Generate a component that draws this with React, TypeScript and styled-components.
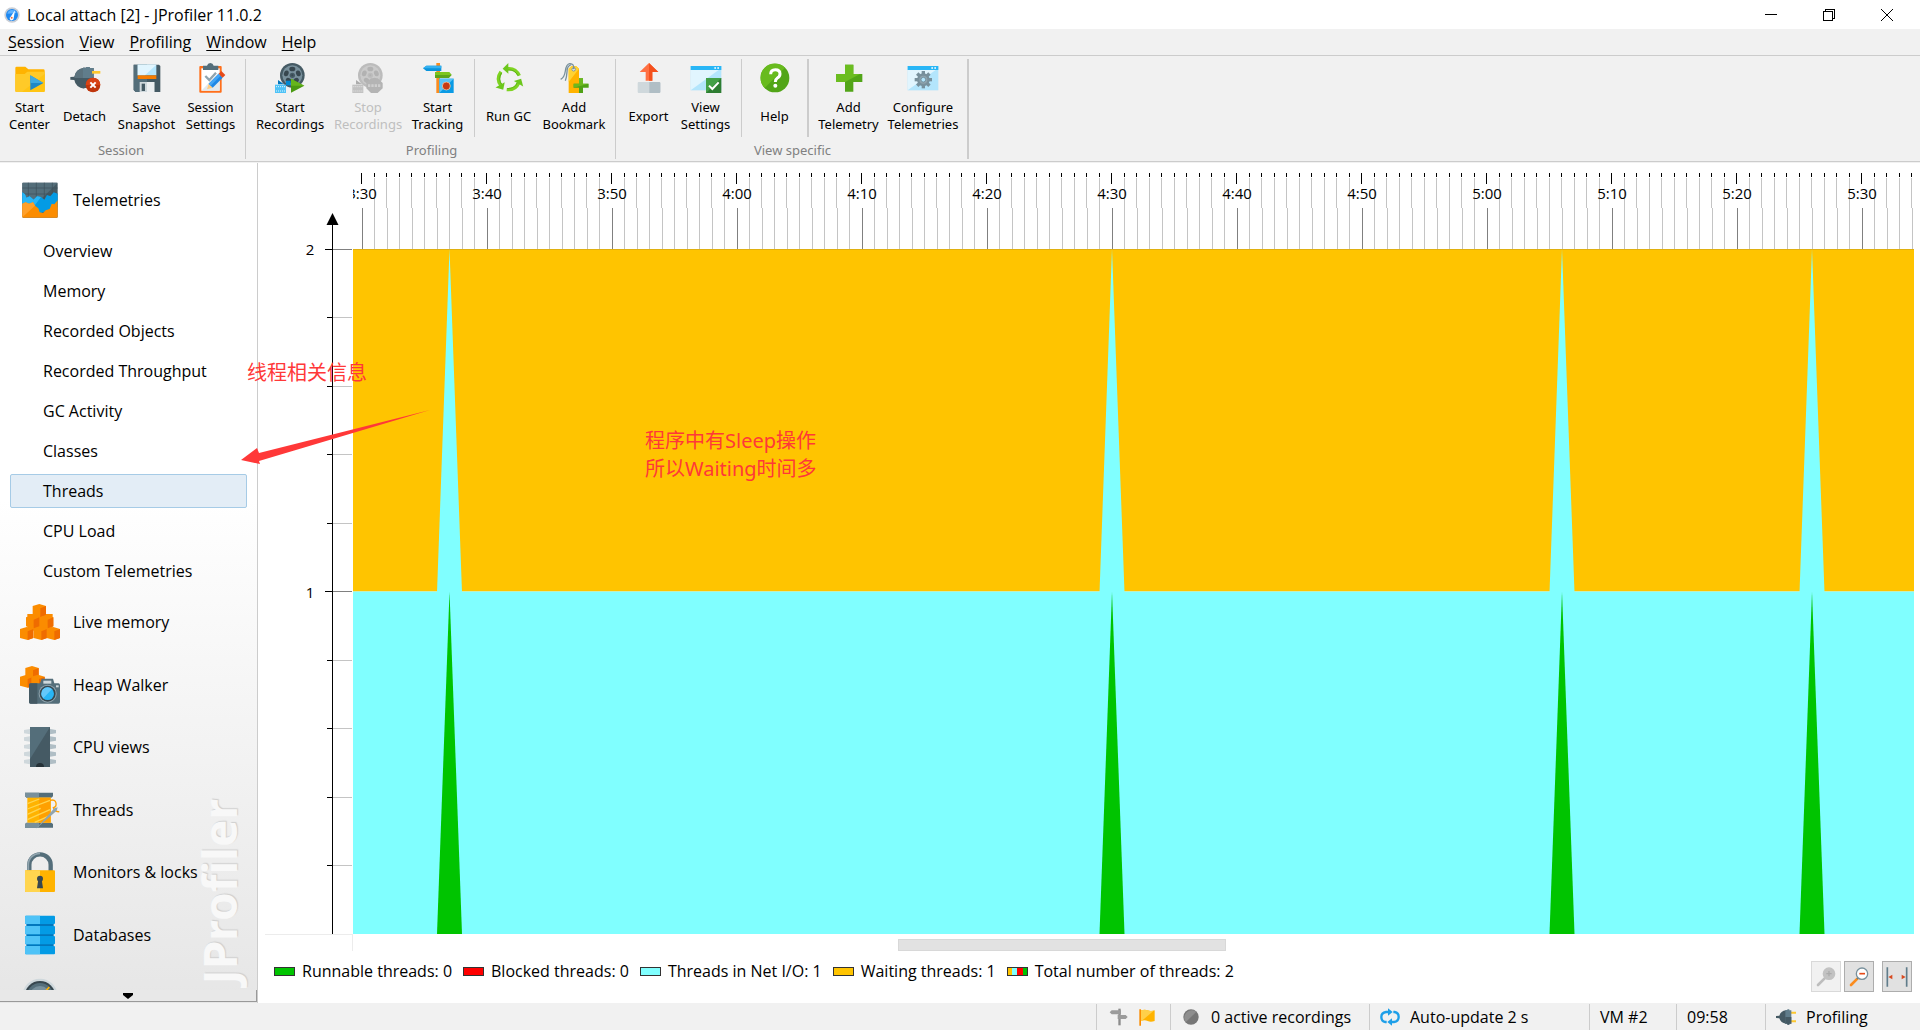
import React, { useLayoutEffect, useRef, useState } from "react";
import styled, { createGlobalStyle, css } from "styled-components";

const FONT = '"Open Sans", "Noto Sans", "Noto Sans CJK SC", sans-serif';
const WIDE_FONT = '"Noto Sans", "Open Sans", "Noto Sans CJK SC", sans-serif';
const LINE = "#cccccc";
const CHROME = "#f1f1f1";

const GlobalStyle = createGlobalStyle`
  * { box-sizing: border-box; }
  body { margin: 0; background: #fff; color: #000; font: 16px/20px ${FONT}; }
  button { font: inherit; color: inherit; border: 0; background: none; padding: 0; margin: 0; }
  ul { list-style: none; margin: 0; padding: 0; }
  svg { display: block; flex: none; }
`;

/* ---------- window frame ---------- */

const Window = styled.div`
  display: flex;
  flex-direction: column;
  height: 100vh;
  overflow: hidden;
`;

const TitleBar = styled.header`
  display: flex;
  align-items: center;
  height: 29px;
  flex: none;
  padding: 0 4px;
`;

const Title = styled.h1`
  flex: 1;
  margin: 0 0 0 7px;
  font-size: 16px;
  line-height: 20px;
  font-weight: 400;
`;

const WindowButton = styled.button`
  display: grid;
  place-items: center;
  width: 58px;
  height: 29px;
`;

const MenuBar = styled.nav`
  display: flex;
  align-items: center;
  gap: 15px;
  flex: none;
  height: 27px;
  padding: 0 8px;
  background: ${CHROME};
  border-bottom: 1px solid ${LINE};
`;

const MenuButton = styled.button`
  line-height: 20px;

  &::first-letter {
    text-decoration: underline;
    text-underline-offset: 2px;
  }
`;

/* ---------- toolbar ---------- */

const Toolbar = styled.div`
  display: flex;
  flex: none;
  padding: 3px 0 2px;
  background: ${CHROME};
  border-bottom: 1px solid ${LINE};
`;

const ToolGroup = styled.section<{ $edge?: number; $wide?: boolean }>`
  display: flex;
  flex-direction: column;
  padding: ${(p) => (p.$wide ? "0 3px 0 5px" : "0 5px 0 2px")};
  border-right: ${(p) => p.$edge ?? 1}px solid ${LINE};
`;

const ToolRow = styled.div`
  display: flex;
  height: 78px;
`;

const ToolButton = styled.button<{ $width: number }>`
  display: flex;
  flex-direction: column;
  align-items: center;
  gap: 5px;
  width: ${(p) => p.$width}px;
  padding-top: 3px;
  font-family: ${WIDE_FONT};
  font-size: 13px;
  line-height: 17px;

  &:disabled {
    color: #bfbfbf;
  }
`;

const ToolLabel = styled.span`
  display: flex;
  align-items: center;
  justify-content: center;
  height: 34px;
  text-align: center;
  white-space: pre;
`;

const ToolDivider = styled.span<{ $thick?: boolean }>`
  width: ${(p) => (p.$thick ? 2 : 1)}px;
  margin: 0 6px;
  background: ${LINE};
`;

const GroupCaption = styled.h2`
  margin: 5px 0 0;
  font-family: ${WIDE_FONT};
  font-size: 13px;
  line-height: 17px;
  font-weight: 400;
  color: #808080;
  text-align: center;
`;

/* ---------- sidebar ---------- */

const Workspace = styled.div`
  position: relative;
  display: flex;
  flex: 1;
  min-height: 0;
  border-top: 1px solid ${CHROME};
`;

const Sidebar = styled.aside`
  position: relative;
  display: flex;
  flex-direction: column;
  flex: none;
  width: 258px;
  border-right: 1px solid ${LINE};
  background: linear-gradient(#fff 40%, #e6e6e6);
`;

const SidebarScroll = styled.div`
  flex: 1;
  min-height: 0;
  overflow: hidden;
`;

const sectionRow = css`
  position: relative;
  z-index: 1;
  display: flex;
  align-items: center;
  gap: 13px;
  width: 100%;
  height: 62px;
  padding: 0 20px;
  text-align: left;
  white-space: nowrap;
`;

const OpenSection = styled.button`
  ${sectionRow}
  height: 68px;
  padding-top: 5px;
`;

const SectionItem = styled.li`
  &:nth-child(even) > button {
    height: 63px;
  }
`;

const SectionButton = styled.button`
  ${sectionRow}
`;

const ViewItem = styled.li`
  padding: 3px 10px;
`;

const ViewButton = styled.button<{ $selected?: boolean }>`
  display: block;
  width: 100%;
  height: 34px;
  padding: 0 32px;
  border: 1px solid ${(p) => (p.$selected ? "#a6cbe6" : "transparent")};
  border-radius: 2px;
  background: ${(p) => (p.$selected ? "#e3edf6" : "none")};
  text-align: left;
`;

const Watermark = styled.span`
  position: absolute;
  right: 10px;
  bottom: 19px;
  writing-mode: vertical-rl;
  rotate: 180deg;
  font-family: ${WIDE_FONT};
  font-size: 46px;
  line-height: 56px;
  font-weight: 700;
  color: #f8f8f8;
  text-shadow: 1px 1px 1px #cfcfcf;
  pointer-events: none;
`;

const ScrollDown = styled.button`
  position: relative;
  display: grid;
  place-items: center;
  height: 12px;
  margin-bottom: 1px;
  background: #e8e8e8;
  border: solid #999;
  border-width: 0 1px 1px 0;
`;

/* ---------- content ---------- */

const Content = styled.main`
  display: flex;
  flex-direction: column;
  flex: 1;
  min-width: 0;
  padding: 0 6px 0 7px;
`;

const ChartArea = styled.div`
  flex: 1;
  min-height: 0;
  overflow: hidden;
`;

const ScrollRow = styled.div`
  display: flex;
  flex: none;
  height: 17px;
`;

const AxisCorner = styled.div`
  width: 88px;
  border: solid #ececec;
  border-width: 1px 1px 0 0;
`;

const ScrollTrack = styled.div`
  display: flex;
  flex: 1;
  padding-top: 5px;
`;

const ScrollThumb = styled.div`
  width: 21%;
  height: 12px;
  margin-left: 34.9%;
  background: #e2e2e2;
  border: 1px solid #d8d8d8;
`;

const Footer = styled.div`
  display: flex;
  align-items: flex-start;
  justify-content: space-between;
  flex: none;
  height: 52px;
  padding: 10px 2px 0 9px;
`;

const Legend = styled.ul`
  display: flex;
  gap: 11px;
`;

const LegendItem = styled.li`
  display: flex;
  align-items: center;
  gap: 7px;
  white-space: nowrap;
`;

const Swatch = styled.span<{ $fill: string }>`
  width: 21px;
  height: 9px;
  border: 1px solid #333;
  background: ${(p) => p.$fill} border-box;
`;

const ZoomTools = styled.div`
  display: flex;
  gap: 3px;
`;

const ZoomButton = styled.button<{ $apart?: boolean }>`
  display: grid;
  place-items: center;
  width: 30px;
  height: 31px;
  margin-left: ${(p) => (p.$apart ? 5 : 0)}px;
  background: #e1e1e1;
  border: 1px solid #adadad;

  &:disabled {
    background: #f1f1f1;
    border-color: #d9d9d9;
  }
`;

/* ---------- status bar ---------- */

const StatusBar = styled.footer`
  display: flex;
  justify-content: flex-end;
  flex: none;
  height: 27px;
  padding-top: 1px;
  background: ${CHROME};
`;

const StatusCell = styled.div<{ $width: number }>`
  display: flex;
  align-items: center;
  gap: 10px;
  width: ${(p) => p.$width}px;
  padding-left: 10px;
  border-left: 1px solid ${LINE};
  white-space: nowrap;
`;

/* ---------- annotations ---------- */

const Note = styled.p<{ $x: number; $y: number }>`
  position: absolute;
  z-index: 3;
  left: ${(p) => p.$x}px;
  top: ${(p) => p.$y}px;
  margin: 0;
  font: 20px/28px ${WIDE_FONT};
  color: #ff3838;
  white-space: pre;
`;

const NoteArrow = styled.svg`
  position: absolute;
  z-index: 3;
  left: 241px;
  top: 247px;
`;

/* ---------- icons ---------- */

type IconProps = { box: string; size?: number; children: React.ReactNode };

const Icon = ({ box, size = 32, children }: IconProps) => (
  <svg width={size} height={size} viewBox={box} aria-hidden="true">
    {children}
  </svg>
);

const StartCenterIcon = () => (
  <Icon box="42 186 96 96">
    <path d="M46 204q0-4 4-4h26l9 8h45q4 0 4 4v60q0 4-4 4H50q-4 0-4-4z" fill="#ffb300" />
    <path d="M46 222l28 0 8-7h52v57q0 4-4 4H50q-4 0-4-4z" fill="#ffca28" />
    <path d="M134 222v50q0 4-4 4H66z" fill="#ffc107" opacity=".6" />
    <path d="M91 226l39 23-39 22z" fill="#1e88c8" />
    <path d="M91 226l39 23H91z" fill="#3fa9e0" />
  </Icon>
);

const DetachIcon = () => (
  <Icon box="206 186 96 96">
    <path d="M210 231l12-1q4-24 30-27v63q-26-3-30-26l-12-1z" fill="#455a64" />
    <path d="M222 234q2-27 30-31v31z" fill="#5b727d" />
    <path d="M248 203h10v-2h10v3h12v60h-32z" fill="#455a64" />
    <path d="M248 203h10v-2h10v3h12v30h-32z" fill="#607d8b" />
    <path d="M275 213h25v8h-25z" fill="#fdc82f" />
    <circle cx="278" cy="255" r="22" fill="#bf360c" />
    <path d="M256 255a22 22 0 0 1 44 0z" fill="#d84315" />
    <path d="M270 247l16 16M286 247l-16 16" stroke="#fff" strokeWidth="6" />
  </Icon>
);

const SaveIcon = () => (
  <Icon box="391 186 96 96">
    <path d="M399 194h76l4 4v78h-74l-6-6z" fill="#455a64" />
    <path d="M399 194h40v82h-34l-6-6z" fill="#546e7a" />
    <path d="M411 194h56v32h-56z" fill="#b3e5fc" />
    <path d="M411 194h56l-34 32h-22z" fill="#e1f5fe" />
    <path d="M411 226h56v11h-56z" fill="#f57c00" />
    <path d="M417 246h44v30h-44z" fill="#cfd8dc" />
    <path d="M439 246h22v30h-22z" fill="#eceff1" />
    <path d="M423 251h10v22h-10z" fill="#455a64" />
  </Icon>
);

const SessionSettingsIcon = () => (
  <Icon box="584 186 96 96">
    <rect x="597" y="198" width="67" height="80" rx="3" fill="#ff6f1a" />
    <path d="M603 205h55v67h-55z" fill="#fff" />
    <path d="M658 215v57h-55z" fill="#e3e9ec" />
    <path d="M608 197h12q2-8 10-8t10 8h14v13h-46z" fill="#546e7a" />
    <path d="M615 228l12 12 20-22" fill="none" stroke="#90a4ae" strokeWidth="7" />
    <path d="M620 268l5-17 12 12z" fill="#ffcc80" />
    <path d="M625 251l30-30 12 12-30 30z" fill="#1e88e5" />
    <path d="M625 251l30-30 6 6-30 30z" fill="#42a5f5" />
    <path d="M655 221l8-8 12 12-8 8z" fill="#e64a19" />
  </Icon>
);

const Reel = ({ dark, light, hole }: { dark: string; light: string; hole: string }) => (
  <g>
    <circle cx="877" cy="226" r="37" fill={dark} />
    <circle cx="877" cy="226" r="30" fill={light} />
    {[0, 72, 144, 216, 288].map((a) => (
      <ellipse key={a} cx="877" cy="207" rx="9" ry="7" fill={hole} transform={`rotate(${a} 877 226)`} />
    ))}
    <circle cx="877" cy="226" r="8" fill={dark} />
    <circle cx="877" cy="226" r="3" fill={hole} />
  </g>
);

const StartRecordingsIcon = () => (
  <Icon box="822 186 96 96">
    <Reel dark="#455a64" light="#78909c" hole="#37474f" />
    <path d="M834 240l18 13h-18z" fill="#0277bd" />
    <path d="M825 254h33v25h-33z" fill="#4fc3f7" />
    <path d="M828 260h27M828 273h27" stroke="#e1f5fe" strokeWidth="3" strokeDasharray="3 3" />
    <path d="M858 242h14v14h-14z" fill="#0288d1" />
    <path d="M873 236l40 21-40 21z" fill="#4a9a12" />
    <path d="M873 236l40 21h-40z" fill="#66b51c" />
  </Icon>
);

const StopRecordingsIcon = () => (
  <Icon box="822 186 96 96">
    <Reel dark="#bcbcbc" light="#cacaca" hole="#b2b2b2" />
    <path d="M834 240l18 13h-18z" fill="#adadad" />
    <path d="M823 254h33v25h-33z" fill="#c2c2c2" />
    <path d="M826 260h27M826 273h27" stroke="#e4e4e4" strokeWidth="3" strokeDasharray="3 3" />
    <path d="M879 235h20l15 14v16l-15 14h-20l-14-14v-16z" fill="#b4b4b4" />
    <path d="M870 257h38" stroke="#cfcfcf" strokeWidth="8" strokeDasharray="7 3" />
  </Icon>
);

const TrackingIcon = () => (
  <Icon box="1264 186 96 96">
    <path d="M1307 189h11v90h-11z" fill="#fb8c1e" />
    <path d="M1277 197h45v16h-45l-10-8z" fill="#0a94dc" />
    <path d="M1277 197h45v8h-55z" fill="#35b1f0" />
    <path d="M1303 216h42l8 9-8 9h-42z" fill="#5ca51b" />
    <path d="M1303 216h42l8 9h-50z" fill="#7cc61f" />
    <path d="M1316 236h43v43h-43z" fill="#0a9be5" />
    <path d="M1316 236h43l-43 43z" fill="#58c4f7" />
    <circle cx="1337" cy="258" r="12" fill="#c63a12" stroke="#ffe0b2" strokeWidth="2" />
  </Icon>
);

const RunGcIcon = () => (
  <Icon box="39 186 96 96">
    {[0, 120, 240].map((a) => (
      <g key={a} transform={`rotate(${a} 87 237)`}>
        <path d="M82 206q25-3 36 21" fill="none" stroke="#7ed321" strokeWidth="10" />
        <path d="M84 210q20-2 30 17" fill="none" stroke="#5db318" strokeWidth="3" />
        <path d="M68 206l17-17v32z" fill="#6cc71c" />
      </g>
    ))}
  </Icon>
);

const BookmarkIcon = () => (
  <Icon box="235 186 96 96">
    <path d="M267 206l8-7h15l8 7v73h-31z" fill="#ffb300" />
    <path d="M267 206l8-7h15l8 7-31 40z" fill="#ffd233" />
    <circle cx="282" cy="208" r="5" fill="#fff" stroke="#78909c" strokeWidth="3" />
    <path d="M282 208q2-18-12-17-10 1-13 22-3 20-14 25M275 194q-13 3-13 22-1 16-5 26" fill="none" stroke="#78909c" strokeWidth="4" />
    <path d="M298 235h12v16h17v12h-17v16h-12v-16h-16v-12h16z" fill="#4fa116" />
    <path d="M298 235h12v16h17l-45 12v-12h16z" fill="#6bb81f" />
  </Icon>
);

const ExportIcon = () => (
  <Icon box="458 186 96 96">
    <path d="M506 189l28 27h-18v26h-20v-26h-18z" fill="#ff7043" />
    <path d="M506 189l28 27h-18v26h-10z" fill="#f4511e" />
    <rect x="472" y="246" width="68" height="33" rx="3" fill="#cfd8dc" />
    <path d="M507 246h30q3 0 3 3v27q0 3-3 3h-30z" fill="#b0bec5" />
  </Icon>
);

const PaneBack = ({ x }: { x: number }) => (
  <g>
    <path d={`M${x} 198h92v73h-92z`} fill="#b3e5fc" />
    <path d={`M${x} 210h84l-84 61z`} fill="#e1f5fe" />
    <path d={`M${x} 198h92v12h-92z`} fill="#29b6f6" />
    <path d={`M${x + 71} 204h5M${x + 80} 204h5`} stroke="#fff" strokeWidth="4" />
  </g>
);

const ViewSettingsIcon = () => (
  <Icon box="630 186 96 96">
    <PaneBack x={632} />
    <path d="M678 234h46v45h-46z" fill="#2e7d32" />
    <path d="M678 234h46l-46 45z" fill="#43a047" />
    <path d="M687 257l10 10 19-20" fill="none" stroke="#fff" strokeWidth="6" />
  </Icon>
);

const HelpIcon = () => (
  <Icon box="837 186 96 96">
    <circle cx="885" cy="234" r="43" fill="#52a518" />
    <path d="M854 264a43 43 0 1 1 61-61z" fill="#68bb1e" />
    <path d="M872 223q0-14 14-14t14 12q0 8-8 13-6 4-6 12" fill="none" stroke="#fff" strokeWidth="9" />
    <circle cx="886" cy="257" r="6" fill="#fff" />
  </Icon>
);

const AddTelemetryIcon = () => (
  <Icon box="1058 186 96 96">
    <path d="M1094 194h25v28h27v24h-27v29h-25v-29h-27v-24h27z" fill="#52a518" />
    <path d="M1094 194h25v28h20l-45 24h-27v-24h27z" fill="#6bbd20" />
  </Icon>
);

const ConfigureIcon = () => (
  <Icon box="1279 186 96 96">
    <PaneBack x={1281} />
    {[0, 45, 90, 135].map((a) => (
      <path key={a} d="M1323 213h10v52h-10z" fill="#78909c" transform={`rotate(${a} 1328 239)`} />
    ))}
    <circle cx="1328" cy="239" r="19" fill="#78909c" />
    <circle cx="1328" cy="239" r="12" fill="#90a4ae" />
    <circle cx="1328" cy="239" r="7" fill="#b3e5fc" stroke="#607d8b" strokeWidth="2" />
  </Icon>
);

const TelemetriesIcon = () => (
  <Icon size={40} box="60 61 120 120">
    <rect x="67" y="69" width="106" height="105" rx="3" fill="#455a64" />
    <path d="M67 69h106l-56 56H67z" fill="#546e7a" />
    <path d="M85 69v50M109 69v50M133 69v50M157 69v40M67 85h106M67 103h106" stroke="#3d505a" strokeWidth="2" />
    <path d="M67 98l8 6 4 10 10-4 12 10 10-10 12 2 10 8 8-14 10 4 10-12 12 4v40l-60 22-46-26z" fill="#039be5" />
    <path d="M67 98l8 6 4 10 10-4 12 10 10-10 12 2-24 32-32-12z" fill="#29b6f6" />
    <path d="M67 132l10-4 10 4 12-4 8 12 8 6 4 12 10 2 8-8 12-4 6-16 8 2 10-12v49q0 3-3 3H70q-3 0-3-3z" fill="#fb8c00" />
    <path d="M67 132l10-4 10 4 12-4 6 10-38 35z" fill="#ffa02a" />
  </Icon>
);

const Cube = ({ x, y }: { x: number; y: number }) => (
  <g transform={`translate(${x} ${y})`}>
    <path d="M0 6L20 0l20 6v27l-17 6-23-6z" fill="#fb8c00" />
    <path d="M23 13l17-7v27l-17 6z" fill="#ef6c00" />
  </g>
);

const LiveMemoryIcon = () => (
  <Icon size={40} box="60 486 120 120">
    <path d="M82 522h76v50H82z" fill="#fb8c00" />
    <path d="M60 486h38v40H60z" fill="none" />
    <Cube x={98} y={492} />
    <Cube x={78} y={526} />
    <Cube x={120} y={526} />
    <Cube x={60} y={561} />
    <Cube x={101} y={561} />
    <Cube x={140} y={561} />
  </Icon>
);

const HeapWalkerIcon = () => (
  <Icon size={40} box="60 673 120 120">
    <Cube x={76} y={676} />
    <Cube x={60} y={702} />
    <Cube x={94} y={702} />
    <path d="M87 733q0-5 5-5h28l5-14h34l4 14h12q5 0 5 5v51q0 5-5 5H92q-5 0-5-5z" fill="#546e7a" />
    <path d="M87 733q0-5 5-5h20v61H92q-5 0-5-5z" fill="#455a64" />
    <path d="M130 720h24v9h-24z" fill="#cfd8dc" />
    <circle cx="143" cy="759" r="27" fill="#90a4ae" />
    <circle cx="143" cy="759" r="24" fill="#37474f" />
    <circle cx="143" cy="759" r="19" fill="#29b6f6" />
    <path d="M130 773a19 19 0 0 1 26-28z" fill="#64c8fa" />
    <path d="M168 737h8" stroke="#cfd8dc" strokeWidth="6" />
  </Icon>
);

const CpuIcon = () => (
  <Icon size={40} box="60 -6 120 120">
    {[8, 30, 53, 75, 98].map((y) => (
      <g key={y}>
        <path d={`M72 ${y - 5}l18-3v16l-18-3z`} fill="#cfd8dc" />
        <path d={`M168 ${y - 5}l-18-3v16l18-3z`} fill="#b0bec5" />
      </g>
    ))}
    <path d="M90-6h60v120H90z" fill="#455a64" />
    <path d="M90-6h60L90 90z" fill="#546e7a" />
    <path d="M108 114q0-12 12-12t12 12z" fill="#263238" />
  </Icon>
);

const ThreadsIcon = () => (
  <Icon size={40} box="60 181 120 120">
    <path d="M75 189h84v11l-5 4H80l-5-4z" fill="#546e7a" />
    <path d="M75 189h42v15H80l-5-4z" fill="#78909c" />
    <path d="M75 283l5-4h74l5 4v11H75z" fill="#546e7a" />
    <path d="M75 283l5-4h37v15H75z" fill="#78909c" />
    <path d="M82 204h70v75H82z" fill="#ffb300" />
    <path d="M117 204h35v75h-35z" fill="#ffa000" />
    <path d="M82 222l36-14M82 238l68-26M82 254l40-18M82 270l68-30M104 278l46-20" stroke="#ffd54f" strokeWidth="4" />
    <path d="M150 212q16-4 18 8t-8 14q4 14 18 12" fill="none" stroke="#ffa000" strokeWidth="4" />
    <path d="M107 298l56-62 10-3-3 10z" fill="#90a4ae" />
  </Icon>
);

const LockIcon = () => (
  <Icon size={40} box="60 368 120 120">
    <path d="M88 426v-20a32 31 0 0 1 64 0v20" fill="none" stroke="#546e7a" strokeWidth="13" />
    <path d="M85 426v-20a35 34 0 0 1 35-34" fill="none" stroke="#90a4ae" strokeWidth="5" />
    <rect x="75" y="423" width="90" height="65" rx="3" fill="#ffb300" />
    <path d="M78 423h42v65H78q-3 0-3-3v-59q0-3 3-3z" fill="#ffd54f" />
    <circle cx="120" cy="448" r="9" fill="#37474f" />
    <path d="M115 450h10l4 27h-18z" fill="#37474f" />
  </Icon>
);

const DatabaseIcon = () => (
  <Icon size={40} box="60 557 120 120">
    <path d="M79 570h82v95H79z" fill="#0277bd" />
    {[559, 590, 620, 650].map((y) => (
      <g key={y}>
        <rect x="75" y={y} width="90" height="25" rx="3" fill="#039be5" />
        <path d={`M78 ${y}h42v25H78q-3 0-3-3v-19q0-3 3-3z`} fill="#4fc3f7" />
      </g>
    ))}
  </Icon>
);

const GaugeIcon = () => (
  <Icon size={40} box="60 742 120 120">
    <circle cx="120" cy="800" r="53" fill="#cfd8dc" />
    <circle cx="120" cy="800" r="46" fill="#37474f" />
    <circle cx="120" cy="800" r="40" fill="#546e7a" />
    <circle cx="120" cy="800" r="31" fill="#78909c" />
    <path d="M120 804l28-32" stroke="#ffb300" strokeWidth="5" />
  </Icon>
);

const AppIcon = () => (
  <svg width="16" height="16" viewBox="0 0 48 48" aria-hidden="true">
    <circle cx="24" cy="24" r="23" fill="#c9ced6" />
    <circle cx="24" cy="24" r="18" fill="#1e88f0" />
    <path d="M10 20a15 15 0 0 1 28-2z" fill="#5fb2ff" />
    <path d="M33 10l-4 24a6 6 0 1 1-9-5z" fill="#fff" />
    <circle cx="23" cy="32" r="3" fill="#ef6c3a" />
  </svg>
);

const SignpostIcon = () => (
  <svg width="22" height="18" viewBox="-6 0 66 54" aria-hidden="true">
    <path d="M28 2h7v50h-7z" fill="#8c8c8c" />
    <path d="M8 7h28v12H8l-6-6zM26 21h24l6 6-6 6H26z" fill="#9b9b9b" />
  </svg>
);

const FlagIcon = () => (
  <svg width="16" height="17" viewBox="0 0 48 51" aria-hidden="true">
    <path d="M1 1h5v49H1z" fill="#fb8c00" />
    <path d="M6 4q12-4 20 0t21 0v32q-12 4-21 0t-20 0z" fill="#ffb300" />
    <path d="M6 4q12-4 20 0t18 1L8 36H6z" fill="#ffd04a" />
  </svg>
);

const RecordIcon = () => (
  <svg width="20" height="16" viewBox="-6 0 60 48" aria-hidden="true">
    <circle cx="24" cy="24" r="23" fill="#767676" />
    <path d="M8 40A23 23 0 0 1 40 8z" fill="#8e8e8e" />
  </svg>
);

const SyncIcon = () => (
  <svg width="20" height="18" viewBox="0 0 60 54" aria-hidden="true">
    <g fill="none" stroke="#1e9fe8" strokeWidth="7">
      <path d="M20 42h-4q-12-2-12-15t14-15h10" />
      <path d="M40 12h4q12 2 12 15t-14 15H32" />
    </g>
    <path d="M24 1l14 11-14 11zM36 31L22 42l14 11z" fill="#1e9fe8" />
  </svg>
);

const PlugIcon = () => (
  <svg width="20" height="16" viewBox="0 0 60 48" aria-hidden="true">
    <path d="M42 8h18v6H42zM42 34h18v6H42z" fill="#fdc82f" />
    <path d="M0 21l10-1Q14 6 30 4v40Q14 42 10 28L0 27z" fill="#455a64" />
    <path d="M28 3h6V1h6v3h6v40h-6v3h-6v-3h-6z" fill="#607d8b" />
    <path d="M28 24h18v20h-6v3h-6v-3h-6z" fill="#455a64" />
  </svg>
);

const LensIcon = ({ minus }: { minus?: boolean }) => (
  <svg width="20" height="20" viewBox="0 0 60 60" aria-hidden="true">
    <path d="M6 54l20-20" stroke={minus ? "#fb8c1e" : "#bdbdbd"} strokeWidth="8" strokeLinecap="round" />
    <path d="M24 36l6-6" stroke={minus ? "#607d8b" : "#bdbdbd"} strokeWidth="5" />
    <circle cx="39" cy="20" r="17" fill={minus ? "#fff" : "#c2c2c2"} stroke={minus ? "#78909c" : "#c2c2c2"} strokeWidth="4" />
    {minus ? (
      <path d="M31 20h17" stroke="#e64a19" strokeWidth="5" />
    ) : (
      <path d="M31 20h16M39 12v16" stroke="#ababab" strokeWidth="4" />
    )}
  </svg>
);

const FitIcon = () => (
  <svg width="22" height="20" viewBox="0 0 66 60" aria-hidden="true">
    <path d="M4 1v58M62 1v58" stroke="#607d8b" strokeWidth="5" />
    <path d="M7 30l12-7v14zM59 30l-12-7v14z" fill="#d84a20" />
  </svg>
);

/* ---------- thread history chart ---------- */

const SECOND = 12.5;
const PLOT_LEFT = 88;
const PLOT_TOP = 86;
const AXIS_X = 67;
const FIRST_MARK = 97;
const FIRST_TIME = 210;
const SPIKES = [217, 270, 306, 326];

const timeX = (t: number) => FIRST_MARK + (t - FIRST_TIME) * SECOND;
const clock = (t: number) => `${Math.floor(t / 60)}:${String(t % 60).padStart(2, "0")}`;

function useSize<T extends HTMLElement>() {
  const ref = useRef<T>(null);
  const [size, setSize] = useState({ width: 1649, height: 771 });
  useLayoutEffect(() => {
    const node = ref.current;
    if (!node) return;
    const read = () => setSize({ width: node.clientWidth, height: node.clientHeight });
    read();
    const observer = new ResizeObserver(read);
    observer.observe(node);
    return () => observer.disconnect();
  }, []);
  return { ref, size };
}

function ThreadChart() {
  const { ref, size } = useSize<HTMLDivElement>();
  const { width, height } = size;
  const unit = (height - PLOT_TOP) / 2;
  const middle = PLOT_TOP + unit;
  const count = Math.max(0, Math.floor((width - FIRST_MARK) / SECOND)) + 1;
  const seconds = Array.from({ length: count }, (_, i) => FIRST_TIME + i);

  return (
    <ChartArea ref={ref}>
      <svg width={width} height={height} role="img" aria-label="Thread states over time">
        <clipPath id="plot-columns">
          <rect x={PLOT_LEFT} y="0" width={Math.max(0, width - PLOT_LEFT)} height={height} />
        </clipPath>
        <g clipPath="url(#plot-columns)">
          <g shapeRendering="crispEdges">
            {seconds.map((t) => {
              const low = Math.floor(timeX(t));
              const high = Math.floor(timeX(t) - 0.5);
              const major = t % 10 === 0;
              return (
                <g key={t}>
                  <rect x={high} y="10" width="1" height={major ? 11 : 4} fill="#000" />
                  {!major && <rect x={high} y="15" width="1" height="30" fill="#c4c4c4" />}
                  <rect x={low} y="45" width="1" height="41" fill={major ? "#808080" : "#c4c4c4"} />
                </g>
              );
            })}
          </g>
          {seconds.filter((t) => t % 10 === 0).map((t) => (
            <text key={t} x={timeX(t)} y="36" textAnchor="middle" fontSize="15">
              {clock(t)}
            </text>
          ))}
          <rect x={PLOT_LEFT} y={PLOT_TOP} width={width} height={unit} fill="#ffc400" />
          <rect x={PLOT_LEFT} y={PLOT_TOP} width={width} height="1" fill="#e0b010" />
          <rect x={PLOT_LEFT} y={middle} width={width} height={unit} fill="#80ffff" />
          {SPIKES.map((t) => {
            const x = timeX(t);
            return (
              <g key={t}>
                <path d={`M${x} ${PLOT_TOP}L${x + SECOND} ${middle + 1}H${x - SECOND}z`} fill="#80ffff" />
                <path d={`M${x} ${middle}L${x + SECOND} ${height}H${x - SECOND}z`} fill="#00c400" />
              </g>
            );
          })}
        </g>
        <g shapeRendering="crispEdges">
          <rect x={AXIS_X} y={PLOT_TOP - 26} width="1" height={height} fill="#000" />
          {Array.from({ length: 10 }, (_, i) => {
            const y = Math.floor(PLOT_TOP + (unit / 5) * i);
            const major = i % 5 === 0;
            return (
              <g key={i}>
                <rect x={AXIS_X - (major ? 7 : 5)} y={y} width={major ? 7 : 5} height="1" fill="#000" />
                <rect x={AXIS_X + 1} y={y} width="19" height="1" fill={major ? "#808080" : "#c4c4c4"} />
              </g>
            );
          })}
        </g>
        <path d={`M${AXIS_X + 0.5} 50l6 12h-12z`} fill="#000" />
        <text x="45" y={PLOT_TOP + 6} textAnchor="middle" fontSize="15">2</text>
        <text x="45" y={middle + 6} textAnchor="middle" fontSize="15">1</text>
      </svg>
    </ChartArea>
  );
}

/* ---------- data ---------- */

type Tool = { label: string; width: number; icon: React.ReactNode; disabled?: boolean };

const sessionTools: Tool[] = [
  { label: "Start\nCenter", width: 55, icon: <StartCenterIcon /> },
  { label: "Detach", width: 55, icon: <DetachIcon /> },
  { label: "Save\nSnapshot", width: 69, icon: <SaveIcon /> },
  { label: "Session\nSettings", width: 59, icon: <SessionSettingsIcon /> },
];
const recordTools: Tool[] = [
  { label: "Start\nRecordings", width: 78, icon: <StartRecordingsIcon /> },
  { label: "Stop\nRecordings", width: 78, icon: <StopRecordingsIcon />, disabled: true },
  { label: "Start\nTracking", width: 61, icon: <TrackingIcon /> },
];
const gcTools: Tool[] = [
  { label: "Run GC", width: 55, icon: <RunGcIcon /> },
  { label: "Add\nBookmark", width: 76, icon: <BookmarkIcon /> },
];
const viewTools: Tool[] = [
  { label: "Export", width: 55, icon: <ExportIcon /> },
  { label: "View\nSettings", width: 59, icon: <ViewSettingsIcon /> },
];
const helpTools: Tool[] = [{ label: "Help", width: 53, icon: <HelpIcon /> }];
const telemetryTools: Tool[] = [
  { label: "Add\nTelemetry", width: 67, icon: <AddTelemetryIcon /> },
  { label: "Configure\nTelemetries", width: 82, icon: <ConfigureIcon /> },
];

const Tools = ({ items }: { items: Tool[] }) => (
  <>
    {items.map((tool) => (
      <ToolButton key={tool.label} type="button" $width={tool.width} disabled={tool.disabled}>
        {tool.icon}
        <ToolLabel>{tool.label}</ToolLabel>
      </ToolButton>
    ))}
  </>
);

const menus = ["Session", "View", "Profiling", "Window", "Help"];

const telemetryViews = [
  "Overview",
  "Memory",
  "Recorded Objects",
  "Recorded Throughput",
  "GC Activity",
  "Classes",
  "Threads",
  "CPU Load",
  "Custom Telemetries",
];

const sections = [
  { label: "Live memory", icon: <LiveMemoryIcon /> },
  { label: "Heap Walker", icon: <HeapWalkerIcon /> },
  { label: "CPU views", icon: <CpuIcon /> },
  { label: "Threads", icon: <ThreadsIcon /> },
  { label: "Monitors & locks", icon: <LockIcon /> },
  { label: "Databases", icon: <DatabaseIcon /> },
  { label: "", icon: <GaugeIcon /> },
];

const legend = [
  { label: "Runnable threads: 0", fill: "linear-gradient(#00c400, #00c400)" },
  { label: "Blocked threads: 0", fill: "linear-gradient(#ff0000, #ff0000)" },
  { label: "Threads in Net I/O: 1", fill: "linear-gradient(#80ffff, #80ffff)" },
  { label: "Waiting threads: 1", fill: "linear-gradient(#ffc400, #ffc400)" },
  {
    label: "Total number of threads: 2",
    fill: "linear-gradient(90deg, #ffc400 25%, #80ffff 25% 50%, #ff0000 50% 75%, #00c400 75%)",
  },
];

export default function App() {
  return (
    <Window>
      <GlobalStyle />
      <TitleBar>
        <AppIcon />
        <Title>Local attach [2] - JProfiler 11.0.2</Title>
        <WindowButton type="button" aria-label="Minimize">
          <svg width="12" height="12" viewBox="0 0 12 12" shapeRendering="crispEdges">
            <path d="M0 5.5h12" stroke="#000" />
          </svg>
        </WindowButton>
        <WindowButton type="button" aria-label="Restore">
          <svg width="12" height="12" viewBox="0 0 12 12" shapeRendering="crispEdges" fill="none" stroke="#000">
            <path d="M.5 2.5h9v9h-9zM2.5 2.5v-2h9v9h-2" />
          </svg>
        </WindowButton>
        <WindowButton type="button" aria-label="Close">
          <svg width="12" height="12" viewBox="0 0 12 12" stroke="#000">
            <path d="M0 0l12 12M12 0L0 12" />
          </svg>
        </WindowButton>
      </TitleBar>

      <MenuBar>
        {menus.map((name) => (
          <MenuButton key={name} type="button">{name}</MenuButton>
        ))}
      </MenuBar>

      <Toolbar>
        <ToolGroup>
          <ToolRow>
            <Tools items={sessionTools} />
          </ToolRow>
          <GroupCaption>Session</GroupCaption>
        </ToolGroup>
        <ToolGroup $wide>
          <ToolRow>
            <Tools items={recordTools} />
            <ToolDivider />
            <Tools items={gcTools} />
          </ToolRow>
          <GroupCaption>Profiling</GroupCaption>
        </ToolGroup>
        <ToolGroup $wide $edge={2}>
          <ToolRow>
            <Tools items={viewTools} />
            <ToolDivider />
            <Tools items={helpTools} />
            <ToolDivider $thick />
            <Tools items={telemetryTools} />
          </ToolRow>
          <GroupCaption>View specific</GroupCaption>
        </ToolGroup>
      </Toolbar>

      <Workspace>
        <Sidebar>
          <Watermark>JProfiler</Watermark>
          <SidebarScroll>
            <OpenSection type="button">
              <TelemetriesIcon />
              Telemetries
            </OpenSection>
            <ul>
              {telemetryViews.map((name) => (
                <ViewItem key={name}>
                  <ViewButton type="button" $selected={name === "Threads"}>{name}</ViewButton>
                </ViewItem>
              ))}
            </ul>
            <ul>
              {sections.map((section) => (
                <SectionItem key={section.label}>
                  <SectionButton type="button" aria-label={section.label || "Next section"}>
                    {section.icon}
                    {section.label}
                  </SectionButton>
                </SectionItem>
              ))}
            </ul>
          </SidebarScroll>
          <ScrollDown type="button" aria-label="Scroll down">
            <svg width="10" height="6" viewBox="0 0 10 6">
              <path d="M0 0h10v2L5 6 0 2z" />
            </svg>
          </ScrollDown>
        </Sidebar>

        <Content>
          <ThreadChart />
          <ScrollRow>
            <AxisCorner />
            <ScrollTrack>
              <ScrollThumb />
            </ScrollTrack>
          </ScrollRow>
          <Footer>
            <Legend>
              {legend.map((entry) => (
                <LegendItem key={entry.label}>
                  <Swatch $fill={entry.fill} />
                  {entry.label}
                </LegendItem>
              ))}
            </Legend>
            <ZoomTools>
              <ZoomButton type="button" aria-label="Zoom in" disabled>
                <LensIcon />
              </ZoomButton>
              <ZoomButton type="button" aria-label="Zoom out">
                <LensIcon minus />
              </ZoomButton>
              <ZoomButton type="button" aria-label="Fit to window" $apart>
                <FitIcon />
              </ZoomButton>
            </ZoomTools>
          </Footer>
        </Content>

        <Note $x={247} $y={196}>线程相关信息</Note>
        <Note $x={645} $y={264}>{"程序中有Sleep操作\n所以Waiting时间多"}</Note>
        <NoteArrow width="190" height="56" viewBox="0 0 190 56" aria-hidden="true">
          <path d="M0 50l16-12 2 5L189 0 18 51l1 3z" fill="#ff3838" />
        </NoteArrow>
      </Workspace>

      <StatusBar>
        <StatusCell $width={74}>
          <SignpostIcon />
          <FlagIcon />
        </StatusCell>
        <StatusCell $width={199}>
          <RecordIcon />
          0 active recordings
        </StatusCell>
        <StatusCell $width={220}>
          <SyncIcon />
          Auto-update 2 s
        </StatusCell>
        <StatusCell $width={87}>VM #2</StatusCell>
        <StatusCell $width={89}>09:58</StatusCell>
        <StatusCell $width={155}>
          <PlugIcon />
          Profiling
        </StatusCell>
      </StatusBar>
    </Window>
  );
}
